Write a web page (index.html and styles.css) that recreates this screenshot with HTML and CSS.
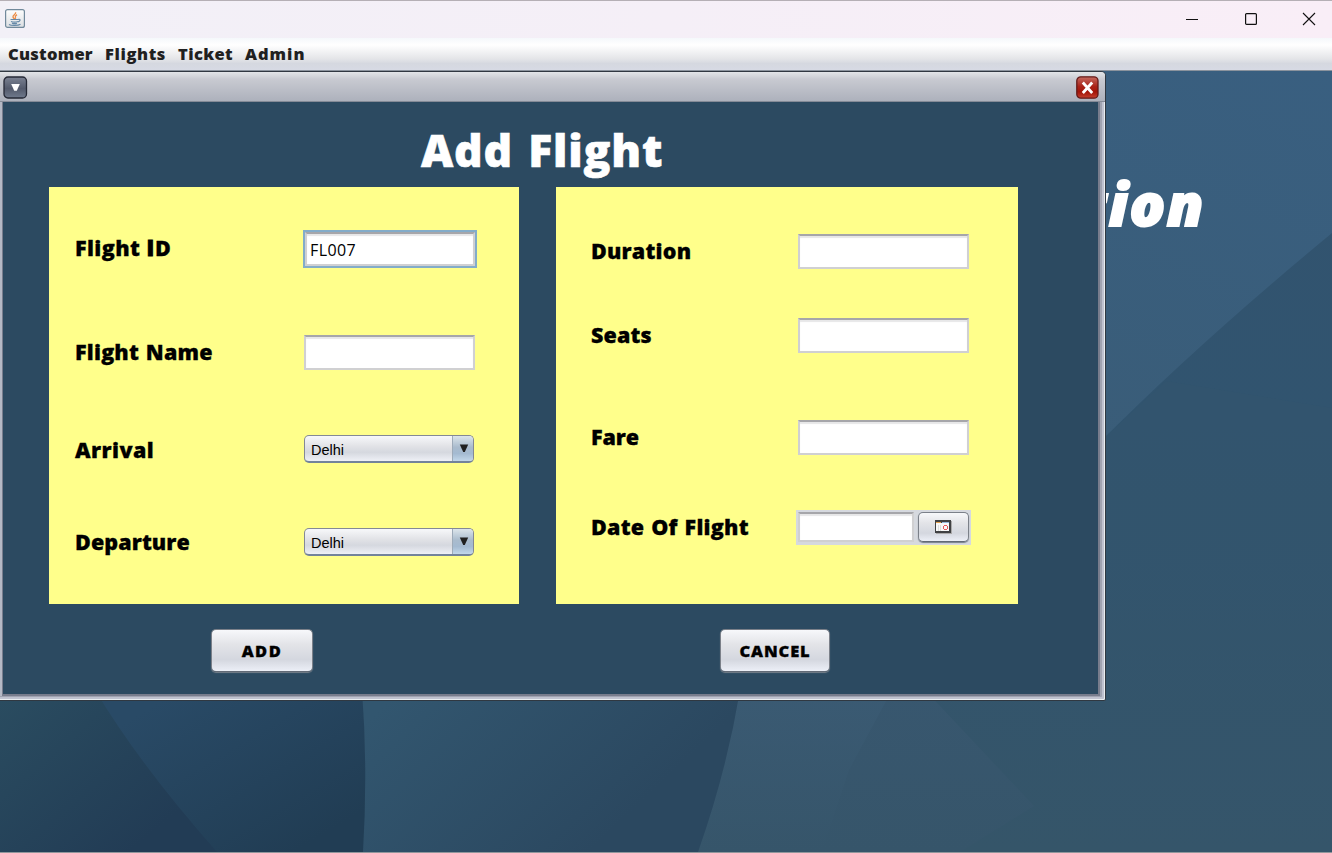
FILE: index.html
```html
<!DOCTYPE html>
<html lang="en">
<head>
<meta charset="utf-8">
<title>Add Flight</title>
<link rel="stylesheet" href="styles.css">
</head>
<body>
<div class="app">
  <header class="titlebar">
    <svg class="java" width="20" height="20" viewBox="0 0 20 20">
      <defs><linearGradient id="jg" x1="0" y1="0" x2="0" y2="1"><stop offset="0" stop-color="#fdfdfd"/><stop offset="1" stop-color="#dcdfe2"/></linearGradient></defs>
      <rect x=".6" y=".6" width="18.8" height="17.8" rx="2" fill="url(#jg)" stroke="#71899b" stroke-width="1.2"/>
      <path d="M10.6 3.2c.8 2-3.200 2.900-2.600 4.800.2.800 1 1.400 1.300 2M12 5.600c-1.500 1-2.200 1.500-1.600 2.700.4.700.1 1.200-.4 1.700" fill="none" stroke="#ec8b43" stroke-width="1.300"/>
      <path d="M5.500 10.500h8M6 12.500c2 .8 5 .8 7 0M7 14.200c1.500.6 3.500.6 5 0M13.500 10.300c2.300-.5 2 2-.4 2.500M4 15.500c2 1.300 9 1.300 11.500-.2" fill="none" stroke="#6689a8" stroke-width="1.200"/>
    </svg>
    <div class="controls">
      <svg width="14" height="14" viewBox="0 0 14 14"><path d="M1 7.500h12" stroke="#111" fill="none"/></svg>
      <svg width="14" height="14" viewBox="0 0 14 14"><rect x="1.600" y="1.600" width="10.800" height="10.800" rx="1" stroke="#111" stroke-width="1.200" fill="none"/></svg>
      <svg width="14" height="14" viewBox="0 0 14 14"><path d="M1 1l12 12M13 1L1 13" stroke="#111" stroke-width="1.100" fill="none"/></svg>
    </div>
  </header>
  <nav class="menubar">
    <span class="m1">Customer</span><span class="m2">Flights</span><span class="m3">Ticket</span><span class="m4">Admin</span>
  </nav>
  <main class="desktop">
    <svg class="wallpaper" viewBox="0 71 1332 781" preserveAspectRatio="none">
      <defs>
        <linearGradient id="base" x1="0" y1="0" x2="0" y2="1"><stop offset="0" stop-color="#32536f"/><stop offset=".45" stop-color="#31546f"/><stop offset="1" stop-color="#355569"/></linearGradient>
        <linearGradient id="top" x1="1" y1="0" x2="0.700" y2="1"><stop offset="0" stop-color="#395f80"/><stop offset="1" stop-color="#3a5c76"/></linearGradient>
        <linearGradient id="a" gradientUnits="userSpaceOnUse" x1="0" y1="700" x2="130" y2="852"><stop offset="0" stop-color="#2a4c60"/><stop offset="1" stop-color="#223c55"/></linearGradient>
        <linearGradient id="b" gradientUnits="userSpaceOnUse" x1="180" y1="690" x2="280" y2="860"><stop offset="0" stop-color="#294a66"/><stop offset="1" stop-color="#213d54"/></linearGradient>
        <linearGradient id="c" gradientUnits="userSpaceOnUse" x1="400" y1="690" x2="570" y2="870"><stop offset="0" stop-color="#32566f"/><stop offset="1" stop-color="#2b4860"/></linearGradient>
        <linearGradient id="d" x1="0" y1="0" x2="0" y2="1"><stop offset="0" stop-color="#3b5b74"/><stop offset="1" stop-color="#36556a"/></linearGradient>
        <linearGradient id="e" x1="0" y1="0" x2="0" y2="1"><stop offset="0" stop-color="#38576f"/><stop offset="1" stop-color="#36556a"/></linearGradient>
      </defs>
      <rect y="71" width="1332" height="781" fill="url(#base)"/>
      <path d="M900 71H1332V233Q1200 342 1100 442L900 620Z" fill="url(#top)"/>
      <path d="M1100 442L1166 381L1332 408V852H1100Z" fill="#36576d" opacity=".3"/>
      <path d="M730 690H925L1034 806L960 852H698Q727 762 739 695Z" fill="url(#e)"/>
      <path d="M740 690H892L849 770L822 852H698Q727 762 739 695Z" fill="url(#d)" opacity=".8"/>
      <path d="M362 690H740Q727 770 698 852H362Q368 770 362 690Z" fill="url(#c)"/>
      <path d="M60 690H362Q368 770 363 852H60Z" fill="url(#b)"/>
      <path d="M0 690H95Q140 765 217 852H0Z" fill="url(#a)"/>
    </svg>
    <div class="banner">Reservation</div>
    <section class="frame">
      <div class="frame-bar">
        <svg width="25" height="24" viewBox="0 0 25 24"><defs><linearGradient id="fm" x1="0" y1="0" x2="0" y2="1"><stop offset="0" stop-color="#7b8292"/><stop offset=".55" stop-color="#535a6c"/><stop offset="1" stop-color="#707a8d"/></linearGradient></defs><rect x="1" y="1" width="22.500" height="21" rx="4" fill="url(#fm)" stroke="#252936" stroke-width="1.300"/><path d="M8.200 8h8.600l-3 6.800h-2.600z" fill="#fff"/></svg>
        <svg width="23" height="24" viewBox="0 0 23 24"><defs><linearGradient id="fc" x1="0" y1="0" x2="0" y2="1"><stop offset="0" stop-color="#c46a60"/><stop offset=".45" stop-color="#aa2318"/><stop offset=".7" stop-color="#a31408"/><stop offset="1" stop-color="#c6402f"/></linearGradient></defs><rect x=".8" y=".8" width="21.200" height="21.400" rx="4" fill="url(#fc)" stroke="#641b19" stroke-width="1.300"/><path d="M6.800 6.500l9.400 10.500M16.200 6.500L6.800 17" stroke="#fff" stroke-width="2.800" fill="none"/></svg>
      </div>
      <div class="frame-body">
        <h1>Add Flight</h1>
        <div class="panels">
          <div class="panel left">
            <div class="row l1"><label class="t1">Flight <span class="plain-i">I</span>D</label><div class="focus"><input class="field" value="FL007"></div></div>
            <div class="row l2"><label class="t2">Flight Name</label><input class="field"></div>
            <div class="row l3"><label class="t3">Arrival</label><div class="combo"><span>Delhi</span><i><svg width="10" height="9" viewBox="0 0 10 9"><path d="M.8.500h8.400L5.800 8H4.200z" fill="#202020"/></svg></i></div></div>
            <div class="row l4"><label class="t4">Departure</label><div class="combo"><span>Delhi</span><i><svg width="10" height="9" viewBox="0 0 10 9"><path d="M.8.500h8.400L5.800 8H4.200z" fill="#202020"/></svg></i></div></div>
          </div>
          <div class="panel right">
            <div class="row r1"><label class="t5">Duration</label><input class="field"></div>
            <div class="row r2"><label class="t6">Seats</label><input class="field"></div>
            <div class="row r3"><label class="t7">Fare</label><input class="field"></div>
            <div class="row r4"><label class="t8">Date Of Flight</label>
              <div class="date"><input class="field"><button class="btn cal">
                <svg width="17" height="14" viewBox="0 0 17 14" shape-rendering="crispEdges"><path d="M1 1h16v13H1z" fill="#aaa9aa"/><path d="M0 0h16v13H0z" fill="#404143"/><path d="M1 3h13v8H1z" fill="#f8f8f8"/><path d="M1 2h5v1H1z" fill="#e6a04b"/><path d="M7 2h7v1H7z" fill="#96b7dc"/><path d="M3 5h1v6H3zM5 5h1v6H5z" fill="#ddd"/><path d="M9 5h3v1H9zM8 6h1v3H8zM12 6h1v3h-1zM9 9h3v1H9z" fill="#e7575b"/></svg>
              </button></div>
            </div>
          </div>
        </div>
        <div class="actions"><button class="btn add"><span>ADD</span></button><button class="btn cancel"><span>CANCEL</span></button></div>
      </div>
    </section>
  </main>
</div>
</body>
</html>
```
FILE: styles.css
```css
* { box-sizing: border-box; }
body { margin: 0; font-family: "Open Sans", "Noto Sans", sans-serif; overflow: hidden; }
.app { width: 1332px; height: 853px; display: flex; flex-direction: column; border-bottom: 1px solid #91979c; }
.titlebar { height: 38px; flex: none; border-top: 1px solid #b5afb5; background: linear-gradient(90deg, #f2f0f7, #f5eff7 50%, #f9eef7); display: flex; justify-content: space-between; padding: 8px 16px 0 5px; }
.controls { display: flex; gap: 44.500px; padding-top: 3px; }
.controls svg { display: block; }
.menubar { height: 33px; flex: none; background: linear-gradient(#f5f8fb, #fff 22%, #e4e5e8 65%, #d5d8e0 80%, #d7dae4); border-bottom: 1px solid #8b939d; display: flex; padding: 4px 0 0 8px; font-weight: 800; font-size: 16.500px; line-height: 24px; letter-spacing: .6px; color: #202020; white-space: nowrap; }
.m1 { width: 97px; letter-spacing: .25px; }
.m2 { width: 73px; }
.m3 { width: 67px; letter-spacing: .4px; }
.m4 { letter-spacing: 1px; }
.desktop { flex: 1; position: relative; overflow: hidden; }
.wallpaper { display: block; width: 1332px; height: 781px; }
.banner { position: absolute; right: 127px; top: 91px; font-size: 59px; line-height: 82px; font-weight: 800; font-style: italic; letter-spacing: 1.500px; -webkit-text-stroke: 2px #fff; color: #fff; }
.frame { position: absolute; left: 0; top: 0; width: 1106px; height: 630px; border: 1px solid #303841; border-left: 0; border-radius: 0 5px 2px 0; background: #b5b9c5; display: flex; flex-direction: column; padding: 0 5px 4px 2px; box-shadow: inset -1px -1px #e9edf0, inset -3px -3px #bfc2cf, inset -5px -4px #a0a3b1; }
.frame-bar { height: 30px; margin: 0 -5px 0 -2px; flex: none; border-bottom: 1px solid #858b97; border-radius: 0 4px 0 0; background: linear-gradient(#e2e5e8, #c8cad1 25%, #adb1bc); display: flex; justify-content: space-between; padding: 3.500px 6.500px 0 2.500px; }
.frame-body { flex: 1; background: #2c4a61; border: 1px solid #787d8d; border-width: 0 2px 2px 1px; }
h1 { margin: 0; padding: 17px 0 0 418px; font-size: 44.500px; line-height: 61px; height: 85px; font-weight: 800; letter-spacing: .8px; word-spacing: 3px; -webkit-text-stroke: .6px #fff; color: #fff; white-space: nowrap; }
.panels { display: flex; gap: 37px; padding-left: 46px; }
.panel { height: 417px; background: #ffff8b; }
.left { width: 470px; padding: 43px 42px 0 26px; }
.right { width: 462px; padding: 45px 47px 0 35px; }
.row { height: 38px; display: flex; align-items: center; justify-content: space-between; }
.l2 { margin-top: 65px; padding-right: 2px; }
.l3 { margin-top: 59px; padding-right: 3px; }
.l4 { margin-top: 55px; padding-right: 3px; }
.r1, .r2, .r3 { padding-right: 2px; }
.r2 { margin-top: 46px; }
.r3 { margin-top: 64px; }
.r4 { margin-top: 52px; }
label { font-size: 21.500px; line-height: 30px; font-weight: 800; letter-spacing: .2px; word-spacing: 1px; -webkit-text-stroke: .3px #000; color: #000; white-space: nowrap; }
.t1 { padding-bottom: 2px; letter-spacing: .4px; word-spacing: 1px; }
.t3 { padding-top: 1px; letter-spacing: .4px; }
.t4, .t6 { letter-spacing: .1px; }
.t7 { letter-spacing: -.1px; }
.t8 { letter-spacing: .25px; }
.plain-i { font-family: Inter, sans-serif; font-weight: 900; letter-spacing: 1.500px; -webkit-text-stroke: .9px #000; }
.field { display: block; width: 171px; height: 35px; margin: 0; outline: 0; border: 2px solid #d0d0d2; border-top-color: #a6a6aa; border-radius: 0; background: #fff; box-shadow: inset 0 2px 1px #e7e7e8; padding: 0 4px; font: 16px "Open Sans", sans-serif; letter-spacing: .4px; color: #000; }
.focus { border: 2px solid #83acc9; width: 174px; height: 38px; }
.focus .field { width: 170px; height: 34px; padding: 1px 3px 0; }
.combo { width: 170px; height: 28px; border: 1px solid #848995; border-bottom: 2px solid #73839b; border-radius: 5px; background: linear-gradient(#f7f8fa, #e1e2e6 42%, #d5d8df 65%, #eef0f6); display: flex; align-items: stretch; overflow: hidden; }
.combo span { flex: 1; padding-left: 6px; font: 14.500px/28px "Liberation Sans", Arial, sans-serif; color: #000; }
.combo i { width: 21px; border-left: 1px solid #9eabb9; background: linear-gradient(#dce5eb, #a9bbcd 45%, #a4bad1 70%, #c2d7ea); padding: 8px 0 0 6px; }
.combo svg { display: block; }
.date { width: 175px; height: 35px; background: #d6d9df; display: flex; align-items: center; padding: 0 2px; gap: 4px; }
.date .field { width: 116px; height: 30px; }
.btn { padding: 0; border: 1px solid #7b8089; border-bottom-color: #626a76; border-radius: 5px; background: linear-gradient(#f7f8fb, #e3e4e8 35%, #d4d7df 72%, #eceff7); box-shadow: 0 1px 1px #76808b; font: 800 16.500px/41px "Open Sans", "Noto Sans", sans-serif; letter-spacing: .9px; -webkit-text-stroke: .3px #000; color: #000; }
.cal { width: 51px; height: 30px; display: flex; align-items: center; justify-content: center; }
.actions { display: flex; padding: 25px 0 0 208px; gap: 407px; }
.actions .btn { height: 43px; }
.add { width: 102px; letter-spacing: 1.500px; }
.cancel { width: 110px; }
```
